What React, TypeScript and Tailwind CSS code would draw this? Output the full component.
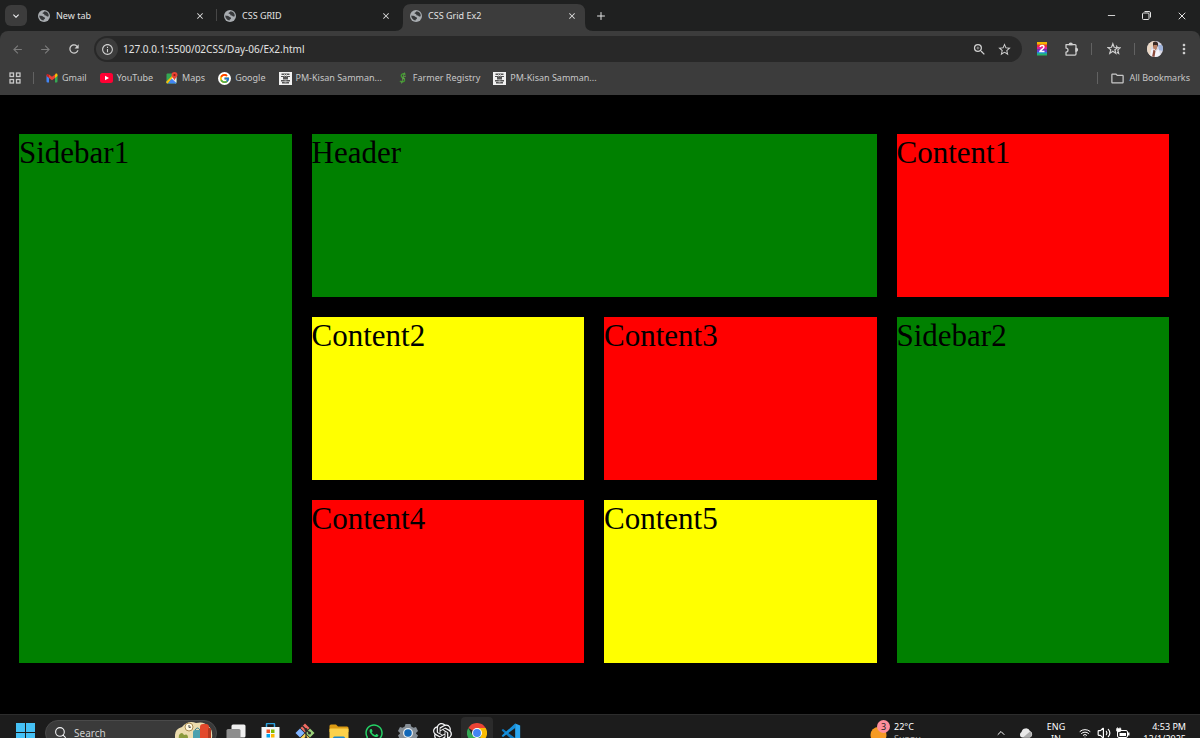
import React from 'react';
import { FcGoogle } from 'react-icons/fc';
import { FaWhatsapp } from 'react-icons/fa';
import { SiOpenai } from 'react-icons/si';
import {
  MdArrowBack,
  MdArrowForward,
  MdClose,
  MdInfoOutline,
  MdKeyboardArrowDown,
  MdMoreVert,
  MdOutlineFolder,
  MdRefresh,
  MdStarBorder,
  MdZoomIn,
} from 'react-icons/md';
import { ChevronUp, Minus, Plus, Search, Volume2, Wifi, X } from 'lucide-react';

const tabs = [
  { title: 'New tab', active: false },
  { title: 'CSS GRID', active: false },
  { title: 'CSS Grid Ex2', active: true },
];

const cells = [
  { name: 'Sidebar1', className: 'bg-[#008000] row-span-3' },
  { name: 'Header', className: 'bg-[#008000] col-span-2' },
  { name: 'Content1', className: 'bg-[#ff0000]' },
  { name: 'Content2', className: 'bg-[#ffff00]' },
  { name: 'Content3', className: 'bg-[#ff0000]' },
  { name: 'Sidebar2', className: 'bg-[#008000] row-span-2' },
  { name: 'Content4', className: 'bg-[#ff0000]' },
  { name: 'Content5', className: 'bg-[#ffff00]' },
];

function GlobeIcon() {
  return (
    <svg className="w-3 h-3" viewBox="0 0 24 24">
      <circle cx="12" cy="12" r="12" fill="#a9adb1" />
      <path d="M13 2.500c-1 3-4 2-4 4.500 2 1 4 1 4 3s3 0 4 2 4 1 4.500 0A9.500 9.500 0 0 0 13 2.500z" fill="#37393b" />
      <path d="M2.500 11c2 1 6 0 7.500 2s4 1 4 3.500-3 1-3 4.500A9.500 9.500 0 0 1 2.500 11z" fill="#37393b" />
    </svg>
  );
}

function GmailIcon() {
  return (
    <svg className="w-3 h-3" viewBox="0 0 24 24">
      <path d="M1 6v13a2 2 0 0 0 2 2h3V10z" fill="#4285f4" />
      <path d="M23 6v13a2 2 0 0 1-2 2h-3V10z" fill="#34a853" />
      <path d="M18 5.500V12l5-4V6c0-2.500-2.500-3.500-4.300-2.200z" fill="#fbbc04" />
      <path d="M6 12V5l6 4.500L18 5v7l-6 4.500z" fill="#ea4335" />
      <path d="M1 6v2l5 4V5.500l-.7-.7C3.500 3.500 1 3.500 1 6z" fill="#c5221f" />
    </svg>
  );
}

function YouTubeIcon() {
  return (
    <svg className="w-[13px] h-[10px]" viewBox="0 0 26 20">
      <rect width="26" height="20" rx="5" fill="#ff0033" />
      <path d="M10 5.500v9l8-4.500z" fill="#fff" />
    </svg>
  );
}

function MapsIcon() {
  return (
    <svg className="w-3 h-3" viewBox="0 0 24 24">
      <rect x="1" y="3" width="20" height="20" rx="2" fill="#34a853" />
      <path d="M1 20 18 4l3 3v14l-2 2-8-9-9 9z" fill="#e8eaed" />
      <path d="M11 13 21 22a2 2 0 0 1-2 1H4z" fill="#4285f4" />
      <path d="M1 19 17 3h3L3 23a2 2 0 0 1-2-2z" fill="#fbbc04" />
      <path d="M17 0a6 6 0 0 0-6 6c0 4 4 5 6 11 2-6 6-7 6-11a6 6 0 0 0-6-6z" fill="#ea4335" />
      <circle cx="17" cy="6" r="2.200" fill="#8c1a12" />
    </svg>
  );
}

function KisanIcon() {
  return (
    <svg className="w-[13px] h-[13px]" viewBox="0 0 26 26">
      <rect width="26" height="26" fill="#f1f1f1" />
      <path d="M5 3h16v3H5zM4 8h18v2H4zM8 10h10v5H8zM4 16h18v3H4zM6 20h14v3H6z" fill="#555" />
      <path d="M10 4h2v5h-2zM14 4h2v5h-2zM11 17h4v4h-4z" fill="#bbb" />
    </svg>
  );
}

function FarmerIcon() {
  return (
    <svg className="ml-1 mr-[2px] w-2 h-3" viewBox="0 0 16 24" fill="none" strokeWidth="3">
      <path d="M13 5C8 2 3 5 5 9c2 3 7 3 6 8-1 3-6 4-9 1" stroke="#3f9b2f" />
      <path d="M11 1 5 23M14 8l-5 2M12 14l-6-2" stroke="#6aa84f" strokeWidth="1.500" />
    </svg>
  );
}

const bookmarks = [
  { name: 'Gmail', icon: <GmailIcon /> },
  { name: 'YouTube', icon: <YouTubeIcon /> },
  { name: 'Maps', icon: <MapsIcon /> },
  { name: 'Google', icon: <FcGoogle className="w-[13px] h-[13px] rounded-full bg-white p-px" /> },
  { name: 'PM-Kisan Samman...', icon: <KisanIcon /> },
  { name: 'Farmer Registry', icon: <FarmerIcon /> },
  { name: 'PM-Kisan Samman...', icon: <KisanIcon /> },
];

function TabStrip() {
  return (
    <div className="flex items-center h-[31px] bg-[#1f2020]">
      <button aria-label="Search tabs" className="ml-[5px] mr-1 w-[22px] h-[21px] rounded-md bg-[#3c3c3c] flex items-center justify-center text-gray-100">
        <MdKeyboardArrowDown className="w-3 h-3" />
      </button>
      {tabs.map((tab, i) => (
        <div key={tab.title} className="relative h-full w-[186px] pt-1 text-[#e3e3e3]">
          {i === 1 && <span className="absolute -left-px top-[9px] w-px h-3 bg-[#474747]" />}
          {tab.active && (
            <svg className="absolute -left-2 bottom-0 w-[198px] h-[27px]" viewBox="0 0 198 27">
              <path d="M0 27Q8 27 8 19V8Q8 0 16 0H182Q190 0 190 8V19Q190 27 198 27z" fill="#3c3c3c" />
            </svg>
          )}
          <div className="relative flex items-center h-6 pl-[7px] pr-3">
            <GlobeIcon />
            <button className="flex-1 pl-[6px] text-left text-[9px]">{tab.title}</button>
            <button aria-label={'Close ' + tab.title}>
              <MdClose className="w-[10px] h-[10px]" />
            </button>
          </div>
        </div>
      ))}
      <button aria-label="New tab" className="ml-[6px] text-[#e3e3e3]">
        <Plus className="w-3 h-3" />
      </button>
      <div className="ml-auto mr-3 flex items-center gap-6 text-[#e3e3e3]">
        <button aria-label="Minimize">
          <Minus className="w-[11px] h-[11px]" strokeWidth={2} />
        </button>
        <button aria-label="Restore">
          <svg className="w-[11px] h-[11px]" viewBox="0 0 11 11" fill="none" stroke="currentColor">
            <rect x="1.500" y="3" width="6.500" height="6.500" rx="1" />
            <path d="M3.500 1.500H8a1.500 1.500 0 0 1 1.500 1.500v4.500" />
          </svg>
        </button>
        <button aria-label="Close window">
          <X className="w-3 h-3" strokeWidth={2} />
        </button>
      </div>
    </div>
  );
}

function Toolbar() {
  return (
    <div className="flex items-center h-9 pl-[11px] pr-2 text-[#d0d0d0]">
      <div className="flex items-center gap-[15px]">
        <button aria-label="Back" className="text-[#7c7c7c]">
          <MdArrowBack className="w-[13px] h-[13px]" />
        </button>
        <button aria-label="Forward" className="text-[#7c7c7c]">
          <MdArrowForward className="w-[13px] h-[13px]" />
        </button>
        <button aria-label="Reload">
          <MdRefresh className="w-[14px] h-[14px]" />
        </button>
      </div>
      <div className="ml-[13px] flex flex-1 items-center h-[26px] rounded-full bg-[#282828] pl-[2px] pr-[10px]">
        <button aria-label="Site information" className="w-[22px] h-[22px] rounded-full bg-[#3c3c3c] flex items-center justify-center">
          <MdInfoOutline className="w-[13px] h-[13px]" />
        </button>
        <input
          aria-label="Address"
          className="ml-[5px] flex-1 bg-transparent text-[10px] text-[#e3e3e3] outline-none"
          defaultValue="127.0.0.1:5500/02CSS/Day-06/Ex2.html"
        />
        <button aria-label="Zoom">
          <MdZoomIn className="w-[15px] h-[15px]" />
        </button>
        <button aria-label="Bookmark this tab" className="ml-[10px]">
          <MdStarBorder className="w-[15px] h-[15px]" />
        </button>
      </div>
      <div className="ml-[14px] flex items-center">
        <button aria-label="Zapp extension">
          <svg className="w-3 h-[14px]" viewBox="0 0 24 28">
            <path d="M2 0h20v6H2z" fill="#f2b600" />
            <path d="M2 5h20v5H2z" fill="#ee2e3c" />
            <path d="M2 10h20v5H2z" fill="#d61f9c" />
            <path d="M2 15h20v5H2z" fill="#6a3dd0" />
            <path d="M2 20h20v4H2z" fill="#1e8fd8" />
            <path d="M2 23h20v4H2z" fill="#25b56a" />
            <path d="M8 10c1-4 8-4 8 0 0 3-7 6-8 9h9" fill="none" stroke="#fff" strokeWidth="3" />
          </svg>
        </button>
        <button aria-label="Extensions" className="ml-4">
          <svg className="w-[15px] h-[15px]" viewBox="0 0 30 30" fill="none" stroke="currentColor" strokeWidth="2.500" strokeLinejoin="round">
            <path d="M4 5h18q2 0 2 2v17q0 2-2 2H4v-6a4 4 0 0 0 0-8z" />
            <path d="M10.500 5a3 3 0 0 1 6 0zM24 12.500a3 3 0 0 1 0 6z" fill="currentColor" />
          </svg>
        </button>
        <span className="ml-3 w-px h-3 bg-[#626262]" />
        <button aria-label="Starred" className="ml-[15px]">
          <svg className="w-[14px] h-[14px]" viewBox="0 0 24 24" fill="none" stroke="currentColor" strokeWidth="2">
            <path d="m10 3 2.200 6 6.300.3-5 4 1.700 6.200-5.200-3.600-5.200 3.600 1.700-6.200-5-4 6.300-.3z" />
            <path d="m16 6 1.500 3.500 5 .5-4 3.500 1.500 6-3-2" />
          </svg>
        </button>
        <span className="ml-[13px] w-px h-3 bg-[#626262]" />
        <button aria-label="Profile" className="ml-3">
          <svg className="w-4 h-4 rounded-full" viewBox="0 0 32 32">
            <rect width="32" height="32" fill="#d9d8e4" />
            <path d="M0 0h16v12H8v20H0z" fill="#ead7c4" />
            <path d="M12 3c5-4 11-1 10 5l-2 5-8-2z" fill="#3b2a25" />
            <path d="M13 8h7v7l-3 4-5-4z" fill="#b97f63" />
            <path d="m8 18 6-3 4 6 5-5 5 16H6z" fill="#f4f3fa" />
            <path d="M22 8h10v12l-8-2z" fill="#9eb3dc" />
            <path d="m13 17 4 3-2 12h-5z" fill="#8c4c3d" />
          </svg>
        </button>
        <button aria-label="Menu" className="ml-[13px]">
          <MdMoreVert className="w-4 h-4" />
        </button>
      </div>
    </div>
  );
}

function BookmarksBar() {
  return (
    <div className="flex items-center h-[22px] pl-[9px] pr-[10px] text-[9px] text-[#c7c7c7]">
      <button aria-label="Apps">
        <svg className="w-3 h-3" viewBox="0 0 12 12" fill="none" stroke="currentColor" strokeWidth="1.300">
          <rect x="1" y="1" width="3.500" height="3.500" />
          <rect x="7.500" y="1" width="3.500" height="3.500" />
          <rect x="1" y="7.500" width="3.500" height="3.500" />
          <rect x="7.500" y="7.500" width="3.500" height="3.500" />
        </svg>
      </button>
      <span className="ml-3 mr-3 w-px h-3 bg-[#626262]" />
      <nav className="flex items-center gap-[13px]">
        {bookmarks.map((b, i) => (
          <a key={i} href="#" className="flex items-center gap-1 whitespace-nowrap">
            {b.icon}
            {b.name}
          </a>
        ))}
      </nav>
      <span className="ml-auto mr-3 w-px h-3 bg-[#626262]" />
      <button className="flex items-center gap-1">
        <MdOutlineFolder className="w-[15px] h-[15px]" />
        All Bookmarks
      </button>
    </div>
  );
}

function StoreIcon() {
  return (
    <svg className="w-[19px] h-[19px]" viewBox="0 0 38 38">
      <path d="M11 9V3q0-2 2-2h12q2 0 2 2v6" fill="none" stroke="#2da0dc" strokeWidth="3" />
      <path d="M1 8h36v24q0 5-5 5H6q-5 0-5-5z" fill="#f5f7f9" />
      <path d="M11 13h7v7h-7z" fill="#f25022" />
      <path d="M20 13h7v7h-7z" fill="#7fba00" />
      <path d="M11 22h7v7h-7z" fill="#00a4ef" />
      <path d="M20 22h7v7h-7z" fill="#ffb900" />
    </svg>
  );
}

function GitIcon() {
  return (
    <svg className="w-5 h-5" viewBox="0 0 40 40">
      <path d="m20 1 9 9-9 9-9-9z" fill="#ef6b62" />
      <path d="m10 11 9 9-9 9-9-9z" fill="#80b3ff" />
      <path d="m30 11 9 9-9 9-9-9z" fill="#9ad07a" />
      <path d="m20 21 9 9-9 9-9-9z" fill="#f7d35c" />
      <path d="m13 4 15 15M22 13v20" fill="none" stroke="#2b2b2b" strokeWidth="2.500" />
      <circle cx="22" cy="13" r="3" fill="#2b2b2b" />
      <circle cx="29" cy="20" r="3" fill="#2b2b2b" />
      <circle cx="22" cy="30" r="3" fill="#2b2b2b" />
    </svg>
  );
}

function ExplorerIcon() {
  return (
    <svg className="w-5 h-[18px]" viewBox="0 0 40 36">
      <path d="M1 4q0-3 3-3h10l4 4h18q3 0 3 3v8H1z" fill="#dc9b13" />
      <path d="M1 11q0-2 2-2h34q2 0 2 2v21q0 3-3 3H4q-3 0-3-3z" fill="#fbd14b" />
      <path d="M8 35v-7q0-3 3-3h18q3 0 3 3v7z" fill="#1c85c7" />
    </svg>
  );
}

function SettingsIcon() {
  return (
    <svg className="w-5 h-5" viewBox="0 0 40 40">
      <path d="M15 2h10l1.500 5 4.500 2.500 5-1.500 4 8-4 4v1l4 4-4 8-5-1.500-4.500 2.500-1.500 5H15l-1.500-5L9 31.500 4 33l-4-8 4-4v-1l-4-4 4-8 5 1.500L13.500 7z" fill="#858d95" />
      <circle cx="20" cy="20" r="10" fill="#e6ebef" />
      <circle cx="20" cy="20" r="7.500" fill="#1268b8" />
    </svg>
  );
}

function ChromeIcon() {
  return (
    <svg className="w-5 h-5" viewBox="0 0 48 48">
      <path d="M24 24 3.200 12A24 24 0 0 1 44.800 12z" fill="#ea4335" />
      <path d="M24 24V12h20.800A24 24 0 0 1 24 48l10.400-18z" fill="#fbbc04" />
      <path d="M3.200 12A24 24 0 0 0 24 48l10.400-18H13.600z" fill="#34a853" />
      <circle cx="24" cy="24" r="12" fill="#fff" />
      <circle cx="24" cy="24" r="9.500" fill="#4285f4" />
    </svg>
  );
}

function VsCodeIcon() {
  return (
    <svg className="w-5 h-5" viewBox="0 0 24 24">
      <path d="M1 8l1.500-.8L17 18v5.500L1 9z" fill="#0f7cc4" />
      <path d="M1 15v1l1.500.800L17 6V.500z" fill="#1590dc" />
      <path d="m17 .500 6 2.500v18l-6 2.500z" fill="#2aa7f2" />
    </svg>
  );
}

const apps = [
  {
    name: 'Task view',
    icon: (
      <svg className="w-5 h-[18px]" viewBox="0 0 40 36">
        <rect x="11" y="1" width="28" height="26" rx="3" fill="#efefef" />
        <rect x="1" y="10" width="28" height="24" rx="3" fill="#8d8d8d" />
      </svg>
    ),
  },
  { name: 'Microsoft Store', icon: <StoreIcon /> },
  { name: 'Git', icon: <GitIcon /> },
  { name: 'File Explorer', icon: <ExplorerIcon /> },
  { name: 'WhatsApp', icon: <FaWhatsapp className="w-5 h-5 text-[#25d366]" /> },
  { name: 'Settings', icon: <SettingsIcon /> },
  { name: 'ChatGPT', icon: <SiOpenai className="w-[19px] h-[19px] text-gray-100" /> },
  { name: 'Chrome', icon: <ChromeIcon />, active: true },
  { name: 'VS Code', icon: <VsCodeIcon /> },
];

function Taskbar() {
  return (
    <footer className="h-6 shrink-0 overflow-hidden border-t border-[#2c2c2c] bg-[#1c1c1c] text-white">
      <div className="flex items-center h-[35px] pl-4 pr-[14px] text-[9px] leading-3">
        <button aria-label="Start">
          <svg className="w-[19px] h-[19px]" viewBox="0 0 19 19">
            <path d="M0 0h9v9H0zM10 0h9v9h-9zM0 10h9v9H0zM10 10h9v9h-9z" fill="#45c1f5" />
          </svg>
        </button>
        <label className="ml-[10px] flex items-center h-[26px] w-[172px] rounded-full border border-[#4a4a4a] bg-[#3a3a3a] pl-2">
          <Search className="w-[13px] h-[13px] text-gray-100" />
          <input aria-label="Search" placeholder="Search" className="ml-[7px] w-[92px] bg-transparent text-[10px] placeholder:text-[#cfcfcf] outline-none" />
          <svg className="ml-2 w-10 h-6" viewBox="0 0 40 24">
            <path d="M1 14q0-6 7-8 6-7 14-4 8-2 12 3 5 3 4 12v7H1z" fill="#ecdcae" />
            <path d="M5 14q3-4 5 0 4-2 4 3v7H4z" fill="#8a9a3c" />
            <circle cx="15" cy="6" r="4" fill="#fff8e0" stroke="#a98b50" />
            <path d="M15 4v2.500l2-.5" fill="none" stroke="#444" />
            <rect x="19" y="9" width="9" height="14" rx="2" fill="#4aa0ae" />
            <path d="M21 9q2.500-4 5 0" fill="none" stroke="#35798a" />
            <rect x="26" y="3" width="9" height="20" rx="3" fill="#e2492c" />
            <rect x="34" y="7" width="3" height="16" rx="1" fill="#b23820" />
          </svg>
        </label>
        <div className="ml-[3px] flex w-[307px] justify-between">
          {apps.map((app) => (
            <button
              key={app.name}
              aria-label={app.name}
              className={'w-8 h-8 rounded flex items-center justify-center ' + (app.active ? 'bg-[#2b2b2b]' : '')}
            >
              {app.icon}
            </button>
          ))}
        </div>
        <button className="ml-auto flex items-center gap-1 text-left">
          <svg className="w-5 h-[26px]" viewBox="0 0 20 26">
            <circle cx="8.500" cy="15" r="8" fill="#f59a23" />
            <circle cx="13.500" cy="6.500" r="6.500" fill="#ff8f9c" />
            <text x="13.500" y="10" textAnchor="middle" fontSize="9" fill="#222">3</text>
          </svg>
          <span className="w-8">
            22°C
            <br />
            <span className="text-[#a5a5a5]">Sunny</span>
          </span>
        </button>
        <div className="ml-[69px] flex items-center">
          <button aria-label="Show hidden icons">
            <ChevronUp className="w-3 h-3" />
          </button>
          <svg className="ml-3 w-[14px] h-[10px]" viewBox="0 0 28 20">
            <path d="M6 19a6 6 0 0 1-1-11 9 9 0 0 1 17-2 7 7 0 0 1 0 13z" fill="#e8e8e8" />
            <path d="m8 19 14-12a7 7 0 0 1 0 12z" fill="#ababab" />
          </svg>
          <button className="ml-3 w-[22px] text-center">
            ENG
            <br />
            IN
          </button>
          <Wifi className="ml-3 w-3 h-3" />
          <Volume2 className="ml-[6px] w-[14px] h-[14px]" />
          <svg className="ml-[5px] w-[14px] h-3" viewBox="0 0 28 24">
            <rect x="3" y="7" width="20" height="14" rx="3" fill="none" stroke="#fff" strokeWidth="2" />
            <path d="M7 12h13v6H7zM24 11h3v6h-3z" fill="#fff" />
            <path d="M1 3h9v5q-4.500 4-9 0zM3 0v4M8 0v4" fill="#fff" stroke="#fff" />
          </svg>
          <button className="ml-3 w-11 text-right whitespace-nowrap">
            4:53 PM
            <br />
            12/1/2025
          </button>
        </div>
      </div>
    </footer>
  );
}

export default function App() {
  return (
    <div className="flex flex-col h-screen overflow-hidden bg-black font-['Noto_Sans','Open_Sans',sans-serif]">
      <header className="shrink-0 bg-[#1f2020]">
        <TabStrip />
        <div className="rounded-t-lg bg-[#3c3c3c] pb-[6px]">
          <Toolbar />
          <BookmarksBar />
        </div>
      </header>
      <main className="flex-1 min-h-0 overflow-hidden pt-[39px] pl-[19px] pr-[31px]">
        <div className="grid grid-cols-4 auto-rows-[163px] gap-5 font-['Liberation_Serif',serif] text-[31px] leading-[38px] text-black">
          {cells.map((cell) => (
            <div key={cell.name} className={cell.className}>
              {cell.name}
            </div>
          ))}
        </div>
      </main>
      <Taskbar />
    </div>
  );
}
